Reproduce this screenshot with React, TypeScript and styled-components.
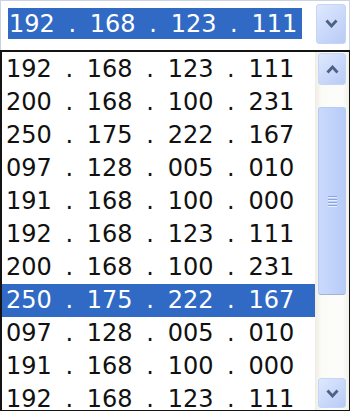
import styled, { createGlobalStyle } from "styled-components";

const GlobalStyle = createGlobalStyle`
  html, body {
    margin: 0;
    padding: 0;
    background: #ffffff;
  }
  body {
    font-family: "DejaVu Sans", Verdana, sans-serif;
  }
`;

const addresses = [
  "192.168.123.111",
  "200.168.100.231",
  "250.175.222.167",
  "097.128.005.010",
  "191.168.100.000",
  "192.168.123.111",
  "200.168.100.231",
  "250.175.222.167",
  "097.128.005.010",
  "191.168.100.000",
  "192.168.123.111",
];

const SELECTED = 7;

const Frame = styled.div`
  width: 350px;
  height: 414px;
  overflow: hidden;
  display: flex;
  flex-direction: column;
  background: #ffffff;
`;

const Combo = styled.div`
  height: 50px;
  flex: 0 0 50px;
  box-sizing: border-box;
  display: flex;
  align-items: center;
  padding: 0 3px 0 7px;
  border: 1px solid #c9d3e3;
  border-bottom: none;
  background: #ffffff;
`;

const Field = styled.div`
  width: 294px;
  height: 31px;
  margin-top: -4px;
  display: flex;
  align-items: center;
  padding-left: 1px;
  box-sizing: border-box;
  background: #316ac5;
  color: #ffffff;
  font-size: 24px;
  white-space: nowrap;
  overflow: hidden;
`;

const Octet = styled.span`
  display: inline-block;
`;

const Dot = styled.span`
  display: inline-block;
  width: 35px;
  text-align: center;
`;

const IpText = ({ value }: { value: string }) => {
  const parts = value.split(".");
  return (
    <>
      {parts.map((p, i) => (
        <span key={i}>
          {i > 0 && <Dot>.</Dot>}
          <Octet>{p}</Octet>
        </span>
      ))}
    </>
  );
};

const ArrowButton = styled.div<{ $height: number }>`
  box-sizing: border-box;
  width: 28px;
  height: ${(p) => p.$height}px;
  flex: 0 0 auto;
  display: flex;
  align-items: center;
  justify-content: center;
  border: 1px solid #c6d5f6;
  border-radius: 3px;
  background: linear-gradient(135deg, #dfe8fd 0%, #c9d8fa 55%, #b8cbf5 100%);
  color: #4d6185;
`;

const ComboButton = styled(ArrowButton)`
  width: 30px;
  margin-left: auto;
  margin-top: -4px;
`;

const Chevron = ({ up }: { up?: boolean }) => (
  <svg width="13" height="9" viewBox="0 0 13 9">
    <polyline
      points={up ? "1.5,7.5 6.5,2 11.5,7.5" : "1.5,1.5 6.5,7 11.5,1.5"}
      fill="none"
      stroke="currentColor"
      strokeWidth="2.8"
    />
  </svg>
);

const List = styled.div`
  flex: 1;
  min-height: 0;
  margin-bottom: 3px;
  display: flex;
  border: 2px solid #141414;
  border-right-width: 1px;
  border-bottom-width: 1px;
  background: #ffffff;
`;

const Rows = styled.div`
  flex: 1;
  min-width: 0;
  overflow: hidden;
  padding-top: 1px;
`;

const Row = styled.div<{ $selected?: boolean }>`
  height: 33px;
  line-height: 33px;
  padding-left: 4px;
  white-space: nowrap;
  font-size: 24px;
  color: ${(p) => (p.$selected ? "#ffffff" : "#111111")};
  background: ${(p) => (p.$selected ? "#316ac5" : "transparent")};
`;

const ScrollBar = styled.div`
  width: 34px;
  flex: 0 0 34px;
  box-sizing: border-box;
  display: flex;
  flex-direction: column;
  align-items: center;
  padding: 1px 0 2px;
  background: linear-gradient(to right, #eeede5 0%, #fbfbf8 20%, #fcfcfa 80%, #f1f0ea 100%);
`;

const Track = styled.div`
  flex: 1;
  width: 100%;
  display: flex;
  flex-direction: column;
  align-items: center;
  padding-top: 22px;
`;

const Thumb = styled.div`
  box-sizing: border-box;
  width: 28px;
  height: 188px;
  display: flex;
  flex-direction: column;
  align-items: center;
  justify-content: center;
  gap: 2px;
  border: 1px solid #b7caf4;
  border-bottom-color: #9fb3de;
  border-radius: 3px;
  background: linear-gradient(to right, #cad9fc 0%, #c1d3fb 50%, #b6cbf7 100%);
`;

const Grip = styled.div`
  width: 9px;
  height: 1px;
  background: #8aa5de;
  box-shadow: 0 1px 0 #e6eeff;
`;

export default function App() {
  return (
    <>
      <GlobalStyle />
      <Frame>
        <Combo>
          <Field>
            <IpText value="192.168.123.111" />
          </Field>
          <ComboButton $height={40}>
            <Chevron />
          </ComboButton>
        </Combo>
        <List>
          <Rows>
            {addresses.map((a, i) => (
              <Row key={i} $selected={i === SELECTED}>
                <IpText value={a} />
              </Row>
            ))}
          </Rows>
          <ScrollBar>
            <ArrowButton $height={32}>
              <Chevron up />
            </ArrowButton>
            <Track>
              <Thumb>
                <Grip />
                <Grip />
                <Grip />
                <Grip />
              </Thumb>
            </Track>
            <ArrowButton $height={30}>
              <Chevron />
            </ArrowButton>
          </ScrollBar>
        </List>
      </Frame>
    </>
  );
}
